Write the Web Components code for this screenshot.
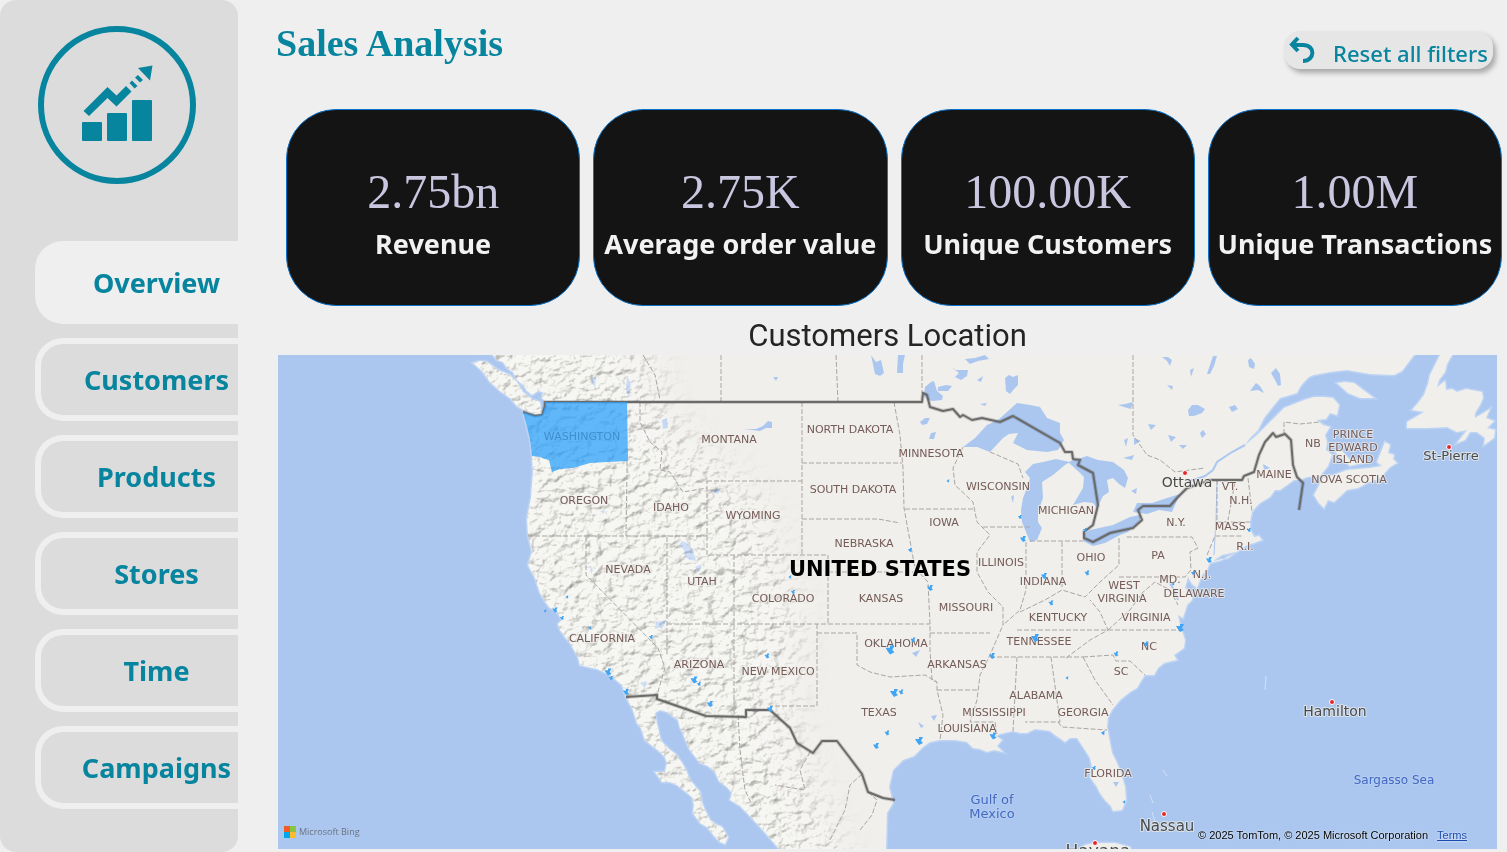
<!DOCTYPE html>
<html lang="en">
<head>
<meta charset="utf-8">
<title>Sales Analysis</title>
<style>
  html, body { margin: 0; min-height: 100%; }
  body { background: #efefef; font-family: "Noto Sans", "Open Sans", sans-serif; --teal: #07849e; }
</style>
</head>
<body>
<sales-dashboard></sales-dashboard>
<script>
const define = (name, html, setup) => {
  const tpl = document.createElement('template');
  tpl.innerHTML = html;
  customElements.define(name, class extends HTMLElement {
    constructor() {
      super();
      this.attachShadow({ mode: 'open' }).append(tpl.content.cloneNode(true));
    }
    connectedCallback() { if (setup) setup(this, this.shadowRoot); }
  });
};

define('brand-logo', `
<style>
  :host { display: block; width: 158px; height: 158px; }
  svg { display: block; width: 100%; height: 100%; fill: var(--teal); }
</style>
<svg viewBox="0 0 158 158" role="img" aria-label="Growth chart">
  <circle cx="79" cy="79" r="76" fill="none" stroke="#07849e" stroke-width="6"/>
  <rect x="44" y="96" width="20" height="19" rx="1"/>
  <rect x="69" y="87" width="20" height="28" rx="1"/>
  <rect x="94" y="74" width="20" height="41" rx="1"/>
  <path d="M45.500 85 69.500 61 78.500 69.500 88 60 93.500 65.500 78.500 80.500 69.500 72 51 90Z"/>
  <path d="M94 54.500 99.500 60 96.500 62.500 91.500 57ZM100 49 105 54 102 56.500 97 51.500Z"/>
  <path d="M100 42 114.500 39.500 112 54.500Z"/>
</svg>`);

define('nav-tab', `
<style>
  :host { display: block; }
  a {
    display: flex; align-items: center; justify-content: center;
    box-sizing: border-box; height: 83px; padding: 0 0 0 34px;
    border: 6px solid #efefef; border-right: 0; border-radius: 28px 0 0 28px;
    color: var(--teal); font-size: 27px; font-weight: 700; text-decoration: none;
  }
  :host([current]) a { background: #efefef; }
</style>
<a href="#"><slot></slot></a>`, (el, root) => {
  const a = root.querySelector('a');
  a.href = '#' + el.textContent.trim().toLowerCase();
  if (el.hasAttribute('current')) a.setAttribute('aria-current', 'page');
});

define('side-bar', `
<style>
  :host {
    display: block; box-sizing: border-box; width: 238px; padding-top: 26px;
    background: #dcdcdc; border-radius: 16px;
  }
  brand-logo { margin-left: 38px; }
  nav { display: flex; flex-direction: column; gap: 14px; margin: 57px 0 0 35px; padding-bottom: 43px; }
</style>
<brand-logo></brand-logo>
<nav aria-label="Reports"><slot></slot></nav>`);

define('reset-button', `
<style>
  :host { display: block; }
  button {
    display: flex; align-items: center; gap: 18px; height: 38px; padding: 0 5px; border: 0;
    border-radius: 16px; background: #e6e6e6; box-shadow: 3px 4px 5px #aaa;
    color: var(--teal); font: 500 22px/30px "Noto Sans", "Open Sans", sans-serif; cursor: pointer;
  }
  svg { width: 26px; height: 28px; }
  span { padding-top: 5px; }
</style>
<button type="button">
  <svg viewBox="0 0 26 28" fill="none" stroke="#07849e" stroke-width="4" aria-hidden="true">
    <path d="M3 9H14C27 9 26 25 14 25"/><path d="M9 2 3 8.500 9 15"/>
  </svg>
  <span><slot></slot></span>
</button>`);

define('kpi-card', `
<style>
  :host {
    display: flex; flex-direction: column; align-items: center; box-sizing: border-box;
    height: 197px; padding-top: 52px; text-align: center; white-space: nowrap;
    background: #141414; border: 1px solid #0a74cc; border-radius: 50px;
  }
  .value { color: #c9c7e0; font: 48px/60px "Liberation Serif", serif; }
  .label { color: #f2f2f2; font: 700 27px/40px "Noto Sans", sans-serif; padding-top: 2px; }
</style>
<div class="value"><slot name="value"></slot></div>
<div class="label"><slot></slot></div>`);

/* ---- Map data: coordinates are in the units of the map's viewBox ---- */
const MAINLAND = `M493 355 497 360 503 362 507 368 513 372 517 380 523 385 527 391 532 395 538 391 543 392 542 398 545 401 550 409 543 415 535 416 523 412
 527 427 530 440 532 455 533 472 531 498 527 518 528 535 532 552 528 565 535 578 540 593 546 603 550 608 556 610 560 617 562 620 558 624 560 630 565 637 570 643 578 657
 580 665 588 667 597 669 610 675 616 680 622 685 626 697 633 710 637 723 641 728 645 740 660 752 665 757 667 763 665 772 655 772 662 782 670 782 677 785 686 792 692 797
 694 805 693 813 700 823 707 827 715 837 720 842 725 844 728 837 722 827 717 825 710 820 705 810 702 803 700 792 690 780 686 770 682 763 676 754 670 750 662 742 660 737 657 724 655 713
 660 710 667 712 678 720 680 728 683 733 686 742 690 750 700 763 708 766 715 772 719 781 727 787 732 793 730 800 740 806 747 813 760 827 768 836 780 850
 886 850 887 813 893 803 889 787 893 770 897 766 903 760 914 756 923 747 930 742 940 740 955 740 967 742 973 748 980 749 987 752 994 750 1003 752 997 746 1002 740 996 736 1000 734
 1013 731 1020 733 1027 733 1035 729 1043 730 1050 731 1055 735 1061 739 1065 742 1070 738 1077 738 1081 744 1085 750 1090 758 1092 767 1090 777 1097 787 1100 793 1105 800 1111 806 1113 811
 1122 810 1126 800 1125 787 1121 773 1117 763 1112 753 1110 743 1107 727 1108 717 1112 710 1120 700 1130 692 1137 688 1141 681 1145 675 1154 675 1158 668 1164 663 1172 661 1177 660 1174 655 1184 648
 1185 640 1180 625 1178 615 1183 618 1187 605 1192 600 1192 594 1185 588 1188 577 1192 584 1197 588 1202 575 1207 570 1210 563 1222 560 1235 553 1247 545 1254 543 1262 540 1259 536 1254 537
 1250 529 1250 522 1252 512 1256 507 1260 503 1270 497 1275 490 1280 490 1287 485 1294 480 1300 480 1307 477 1320 476 1328 466 1332 455 1326 450 1327 442 1325 435 1330 427 1323 425 1317 420
 1326 419 1330 413 1337 415 1339 405 1333 398 1324 397 1314 397 1304 400 1294 404 1284 408 1270 422 1257 435 1245 445 1250 438 1258 430 1264 418 1271 409 1280 398 1287 396 1297 393 1300 387 1304 382
 1309 377 1314 375 1330 372 1347 370 1370 374 1394 375 1402 371 1414 355Z`;
const ISLANDS = `M473 363 480 361 487 362 498 370 510 375 517 382 523 392 532 399 540 402 542 414 535 414 527 412 517 406 510 398 500 391 490 382 482 371Z
 M1314 495 1319 503 1324 508 1328 500 1334 502 1347 490 1358 488 1367 483 1380 478 1390 467 1397 463 1393 459 1394 455 1388 453 1390 445 1385 442 1377 462 1382 466 1370 468 1347 470 1334 475 1323 478Z
 M1335 452 1342 451 1350 460 1363 460 1363 463 1350 466Z M1337 383 1345 382 1354 383 1374 398 1360 398 1348 393Z
 M1440 355 1452 355 1447 364 1445 372 1439 380 1437 387 1445 381 1446 390 1452 389 1457 392 1466 389 1482 392 1483 398 1480 405 1475 413 1475 418 1490 409 1486 418 1494 421 1487 428 1495 430 1494 438 1484 445 1485 438 1477 432 1470 432 1465 440 1457 443 1467 430 1457 432 1447 427 1427 428 1407 428 1407 422 1414 418 1424 412 1412 410 1418 403 1424 395 1428 384 1430 375Z
 M1080 849 1085 845 1095 843 1115 843 1130 847 1131 850Z M1213 561 1222 555 1236 552 1228 558Z`;
const LAKES = `M963 447 975 438 987 425 998 420 1007 412 1017 403 1030 405 1040 407 1047 418 1060 423 1060 433 1064 440 1058 450 1047 452 1027 450 1013 443 1018 433 1009 434 1003 438 990 452 977 447Z
 M1030 542 1026 532 1022 522 1021 510 1023 498 1027 488 1030 478 1025 472 1033 464 1043 462 1056 459 1070 462 1065 465 1053 475 1042 482 1043 498 1038 512 1038 522 1042 528 1037 540Z
 M1068 462 1087 456 1098 460 1113 462 1124 470 1128 478 1125 488 1119 484 1113 478 1107 480 1109 492 1103 496 1097 508 1093 503 1084 502 1073 505 1083 488 1084 477 1079 472Z
 M1083 535 1090 530 1113 525 1130 517 1140 515 1140 520 1128 532 1120 535 1105 543 1093 546 1083 541Z
 M1133 512 1137 503 1152 503 1167 498 1180 494 1172 512 1159 510 1147 514Z
 M871 355 876 362 881 360 884 373 880 376 875 374Z M898 355 905 355 903 364 903 373 897 373Z M1005 378 1009 375 1013 377 1018 375 1018 385 1014 389 1010 394 1006 391Z
 M950 366 956 370 968 370 967 376 961 380 955 377 959 373Z M925 387 931 382 934 381 937 391 943 396 942 400 933 401 928 400 924 396Z M938 387 946 385 952 386 948 391 938 391Z M977 380 983 376 981 382Z
 M965 359 975 358 985 355 989 359 978 361 970 364Z M920 422 925 418 930 418 927 424 922 425Z M929 439 931 433 936 432 934 439Z M1118 405 1125 404 1133 402 1131 409 1124 407Z M980 404 987 403 985 406Z
 M679 545 682 541 687 543 693 550 696 561 690 560 685 557 684 550Z M695 567 702 564 699 572Z M656 622 667 620 663 627 655 629Z
 M744 429 756 429 763 426 768 421 772 422 772 428 766 428 760 431Z M712 491 721 488 718 494Z M662 420 667 418 668 428 663 429Z M591 380 596 375 595 388Z M627 376 631 384 629 397 626 390Z
 M1188 410 1192 405 1198 405 1205 409 1202 413 1194 416 1189 416Z M1229 407 1235 405 1238 409 1232 412Z M1207 374 1210 365 1213 356 1217 356 1214 366 1210 374Z M1190 370 1194 368 1191 377Z M1248 360 1251 358 1255 364 1254 369 1249 367Z
 M1271 373 1276 368 1280 374 1281 385 1278 386 1275 380Z M1250 391 1256 383 1260 386 1264 393 1258 390Z M1162 357 1168 357 1172 360 1170 366 1167 361Z M1167 385 1173 386 1172 390Z M1148 424 1156 425 1151 430Z M1168 435 1176 437 1171 442Z M1200 433 1203 430 1206 434 1202 438Z M1179 445 1187 445 1183 449Z
 M1124 440 1128 438 1126 447Z M1134 438 1141 441 1134 445Z M1123 458 1134 455 1132 460Z M1131 491 1137 488 1136 494Z M1263 464 1270 468 1264 470Z M912 653 920 650 916 657Z M931 716 937 715 934 721Z M918 722 924 726 921 728Z M1113 782 1119 782 1116 787Z M640 683 647 681 645 688Z M590 566 593 570 591 574Z M600 511 605 510 604 514Z M773 377 778 377 776 381Z M1011 497 1014 495 1013 503Z`;
const BORDERS = `M523 412 535 416 542 415 545 406 545 402H922L923 393 927 395 930 407 943 411 953 409 960 417 963 415 972 420 982 418 1000 422 1013 416 1060 443 1065 452 1072 452 1073 459 1080 460 1078 465 1093 473 1098 505 1093 525 1084 532 1084 538 1093 542 1110 533 1133 528 1142 520 1138 510 1143 506H1170L1177 498 1187 488 1210 480H1242L1244 476 1254 472 1259 455 1265 442 1273 433 1276 437 1285 434 1291 440 1293 465 1297 477 1303 483 1299 510
 M626 697 657 695 657 699 706 716 746 717 746 710 770 710 790 728 797 743 813 753 822 741 837 741 850 758 862 774 868 792 883 798 895 800`;
const STATES = `M627 461V470L626 536M528 536H707V481M640 402V422L650 442 662 452 660 470 670 472 683 492 707 488M707 481H802M707 536V555H828V624M802 402V555M802 463H902M802 519H878L900 523M734 555V716M586 537V575L658 648 665 668 657 695M667 537V655M667 624H930M828 572H913M817 624V706H770M817 633H857V665L870 672 890 677 925 675 937 682
 M894 402 900 435 903 468 904 508 912 552 915 568 928 582 930 624V650L932 680 937 682V690L943 715 940 740M905 509H975M963 447 953 468 955 485 973 502 977 522 990 535 977 552 977 572 988 592 1003 607 1003 625 990 655 980 675 977 700 970 722H995L997 735M983 527H1030M990 452 1018 464 1023 478M1026 542V590L1020 610 1003 625M1030 541H1083M1062 542V587M1020 612 1045 600 1062 590 1085 597 1100 582 1119 565V537
 M1119 577H1185L1191 570 1190 552 1198 548 1192 537H1125M1207 555 1215 536H1243M1217 522H1250M1217 480V522M1235 482 1228 520M1248 478 1252 512M1017 630H1180M930 633H990M990 657H1083M1017 657 1013 731M1051 657 1060 722H1025M1058 722 1062 727 1107 730M1083 657 1095 680 1113 705M1083 657 1113 655 1116 661 1130 661 1145 675M937 690H977M1066 658 1090 640 1108 630 1100 612 1090 600M1108 630 1130 610 1142 593 1155 582 1170 590 1178 605M1284 434V422L1300 424 1320 422
 M721 355V402M836 355 838 402M922 355V393M1133 355V435L1147 455 1160 460 1175 472 1205 468M643 355 655 375 660 400M738 715 740 750 745 790 752 805M810 752 800 770 805 790 775 785M862 774 850 785 845 810 830 840M868 792 877 800 872 815 860 830`;
const WASHINGTON = '523,412 535,416 542,415 545,407 545,402 627,402 628,461 607,462 590,463 573,468 560,469 552,472 549,460 545,459 540,457 532,456 530,440 527,427';
const CITIES = [[555,610,5],[545,611,3],[562,618,4],[590,628,3],[608,672,7],[611,678,4],[626,692,6],[651,637,4],[694,680,7],[699,684,4],[710,704,6],[767,656,5],[770,709,6],[793,592,4],[790,577,3],[567,597,3],[557,429,3],[948,481,3],[910,550,4],[930,588,6],[1020,517,4],[1023,539,6],[1044,576,6],[1087,573,5],[1085,530,4],[1051,603,5],[1035,638,8],[992,656,6],[913,640,5],[890,650,9],[894,693,8],[901,692,5],[887,733,5],[876,746,6],[919,741,8],[993,736,7],[1067,678,3],[1103,733,4],[1116,654,5],[1146,644,5],[1094,768,4],[1124,802,3],[1180,628,8],[1209,560,6],[1193,573,4],[1173,584,3],[1249,530,4]];
const LABELS = {
  state: [['WASHINGTON',582,437],['MONTANA',729,440],['NORTH DAKOTA',850,430],['MINNESOTA',931,454],['SOUTH DAKOTA',853,490],['WISCONSIN',998,487],['MICHIGAN',1066,511],['OREGON',584,501],['IDAHO',671,508],['WYOMING',753,516],['IOWA',944,523],['NEBRASKA',864,544],['NEVADA',628,570],['UTAH',702,582],['COLORADO',783,599],['KANSAS',881,599],['ILLINOIS',1001,563],['INDIANA',1043,582],['OHIO',1091,558],['PA',1158,556],['WEST',1124,586],['VIRGINIA',1122,599],['MISSOURI',966,608],['KENTUCKY',1058,618],['VIRGINIA',1146,618],['TENNESSEE',1039,642],['NC',1149,647],['OKLAHOMA',896,644],['ARKANSAS',957,665],['SC',1121,672],['CALIFORNIA',602,639],['ARIZONA',699,665],['NEW MEXICO',778,672],['ALABAMA',1036,696],['TEXAS',879,713],['MISSISSIPPI',994,713],['GEORGIA',1083,713],['LOUISIANA',967,729],['FLORIDA',1108,774],['VT.',1230,487],['N.H.',1241,501],['N.Y.',1176,523],['MASS.',1232,527],['R.I.',1245,547],['N.J.',1202,575],['MD.',1170,580],['DELAWARE',1194,594],['MAINE',1274,475],['NB',1313,444],['PRINCE',1353,435],['EDWARD',1353,448],['ISLAND',1353,460],['NOVA SCOTIA',1349,480]],
  city: [['Ottawa',1187,483,14],['St-Pierre',1451,456,13],['Hamilton',1335,712,14],['Nassau',1167,826,15],['Havana',1098,852,17]],
  sea: [['Gulf of',992,800,13],['Mexico',992,814,13],['Sargasso Sea',1394,780,12]]
};
const DOTS = [[1185,473],[1449,447],[1332,702],[1164,814],[1095,843]];

define('customer-map', `
<style>
  :host { display: block; position: relative; overflow: hidden; background: #abc7f0; }
  svg.map { display: block; width: 100%; height: auto; font-family: "DejaVu Sans", sans-serif; }
  svg.map text { text-anchor: middle; paint-order: stroke; stroke-linejoin: round; stroke: #f0efeb; stroke-opacity: 0.7; stroke-width: 2px; }
  .state { font-size: 11px; fill: #755b57; }
  .city { fill: #4a4a4a; }
  .sea { fill: #4169c0; }
  svg.map .sea { stroke: #b9cff2; }
  svg.map .country { font-size: 21px; font-weight: 700; fill: #000; }
  .brand, .credit { position: absolute; display: flex; align-items: center; }
  .brand { left: 6px; bottom: 9px; gap: 3px; color: #6b7280; font: 9px/16px "Open Sans", sans-serif; }
  .brand svg { width: 12px; height: 12px; }
  .credit { right: 30px; bottom: 6px; gap: 9px; color: #000; font: 11px/16px "Liberation Sans", sans-serif; text-shadow: 0 0 2px #fff; }
  .credit a { color: #1a4bb0; }
</style>
<svg class="map" viewBox="278 355 1219 494" role="img" aria-label="Map of customer locations">
  <defs>
    <filter id="relief" x="0" y="0" width="100%" height="100%" color-interpolation-filters="sRGB">
      <feTurbulence type="fractalNoise" baseFrequency="0.09 0.11" numOctaves="4" seed="8"/>
      <feColorMatrix values="0 0 0 0 0  0 0 0 0 0  0 0 0 0 0  1 0 0 0 0"/>
      <feDiffuseLighting surfaceScale="4" diffuseConstant="1.2" lighting-color="#fffefa">
        <feDistantLight azimuth="225" elevation="60"/>
      </feDiffuseLighting>
    </filter>
    <filter id="soft" x="-20%" y="-20%" width="140%" height="140%"><feGaussianBlur stdDeviation="18"/></filter>
    <mask id="west" maskUnits="userSpaceOnUse" x="460" y="355" width="440" height="495">
      <path d="M420 300H635L670 420 760 500 800 620 790 720 860 900H420Z" fill="#fff" filter="url(#soft)"/>
    </mask>
    <clipPath id="land"><path id="shore" d=""/></clipPath>
  </defs>
  <rect x="278" y="355" width="1219" height="494" fill="#abc7f0"/>
  <g id="base"></g>
  <g clip-path="url(#land)"><g mask="url(#west)" style="mix-blend-mode:multiply">
    <rect x="460" y="355" width="440" height="495" filter="url(#relief)" opacity="0.42"/>
  </g></g>
  <g id="over"></g>
</svg>
<div class="brand">
  <svg viewBox="0 0 12 12" aria-hidden="true"><path fill="#f25b2a" d="M0 0h6v6H0z"/><path fill="#8bc53f" d="M6 0h6v6H6z"/><path fill="#00a9ee" d="M0 6h6v6H0z"/><path fill="#fdbb2d" d="M6 6h6v6H6z"/></svg>
  <span>Microsoft Bing</span>
</div>
<div class="credit"><span>© 2025 TomTom, © 2025 Microsoft Corporation</span><a href="#terms">Terms</a></div>`, (el, root) => {
  const label = (cls, [t, x, y, size]) => `<text class="${cls}" x="${x}" y="${y + Math.round((size || 11) * 0.3)}"${size ? ` font-size="${size}"` : ''}>${t}</text>`;
  const patch = ([x, y, s]) => {
    const h = s / 2;
    return `M${x - h} ${y - h / 2}L${x} ${y - h / 2} ${x} ${y - h} ${x + h} ${y - h} ${x + h / 2} ${y} ${x + h} ${y + h / 2} ${x} ${y + h} ${x - h / 2} ${y + h / 3}Z`;
  };
  root.querySelector('#shore').setAttribute('d', MAINLAND + ISLANDS);
  root.querySelector('#base').innerHTML = `
    <path d="${MAINLAND}${ISLANDS}" fill="#f0efeb" stroke="#bdd3f3" stroke-width="3" paint-order="stroke"/>
    <path d="${LAKES}" fill="#abc7f0"/>
    <path d="M1245 445 1232 452 1217 462 1213 470 1205 476 1187 482M1178 600 1174 590 1170 583" fill="none" stroke="#abc7f0" stroke-width="2"/>
    <path d="M1217 480 1216 520 1214 555" fill="none" stroke="#abc7f0"/>`;
  root.querySelector('#over').innerHTML = `
    <path d="${STATES}" fill="none" stroke="#a9a6a3" stroke-dasharray="5 2"/>
    <path d="${BORDERS}" fill="none" stroke="#000" stroke-opacity="0.15" stroke-width="4" stroke-linejoin="round"/>
    <path d="${BORDERS}" fill="none" stroke="#6b6b6b" stroke-width="2" stroke-linejoin="round"/>
    ${LABELS.state.map(l => label('state', l)).join('')}
    <polygon points="${WASHINGTON}" fill="#2ba0fb" fill-opacity="0.74"/>
    <path d="${CITIES.map(patch).join('')}" fill="#41a5f5"/>
    <path d="M1266 676 1265 690M1163 770 1167 776M1150 795 1153 803M1152 812 1155 822" fill="none" stroke="#d3e1f6"/>
    ${LABELS.city.map(l => label('city', l)).join('')}
    ${LABELS.sea.map(l => label('sea', l)).join('')}
    <text class="country" x="880" y="576">UNITED STATES</text>
    ${DOTS.map(([x, y]) => `<circle cx="${x}" cy="${y}" r="2.500" fill="#e3262b" stroke="#fff" stroke-width="1"/>`).join('')}`;
});

define('sales-dashboard', `
<style>
  :host { display: flex; min-height: 100vh; }
  side-bar { flex: none; }
  main { flex: 1; min-width: 0; display: flex; flex-direction: column; }
  header { display: flex; justify-content: space-between; align-items: flex-start; height: 109px; box-sizing: border-box; padding: 20px 14px 0 38px; }
  h1 { margin: 0; color: var(--teal); font: 700 38px/46px "Liberation Serif", serif; }
  reset-button { margin-top: 11px; }
  .cards { display: grid; grid-template-columns: repeat(4, 1fr); gap: 13px; padding: 0 5px 0 48px; }
  h2 { margin: 0; padding: 10px 0 0 30px; text-align: center; color: #252423; font: 400 31px/39px Roboto, sans-serif; }
  customer-map { margin: 0 10px 0 40px; }
</style>
<side-bar>
  <nav-tab current>Overview</nav-tab>
  <nav-tab>Customers</nav-tab>
  <nav-tab>Products</nav-tab>
  <nav-tab>Stores</nav-tab>
  <nav-tab>Time</nav-tab>
  <nav-tab>Campaigns</nav-tab>
</side-bar>
<main>
  <header>
    <h1>Sales Analysis</h1>
    <reset-button>Reset all filters</reset-button>
  </header>
  <section class="cards" aria-label="Key figures">
    <kpi-card><span slot="value">2.75bn</span>Revenue</kpi-card>
    <kpi-card><span slot="value">2.75K</span>Average order value</kpi-card>
    <kpi-card><span slot="value">100.00K</span>Unique Customers</kpi-card>
    <kpi-card><span slot="value">1.00M</span>Unique Transactions</kpi-card>
  </section>
  <h2>Customers Location</h2>
  <customer-map></customer-map>
</main>`);
</script>
</body>
</html>
